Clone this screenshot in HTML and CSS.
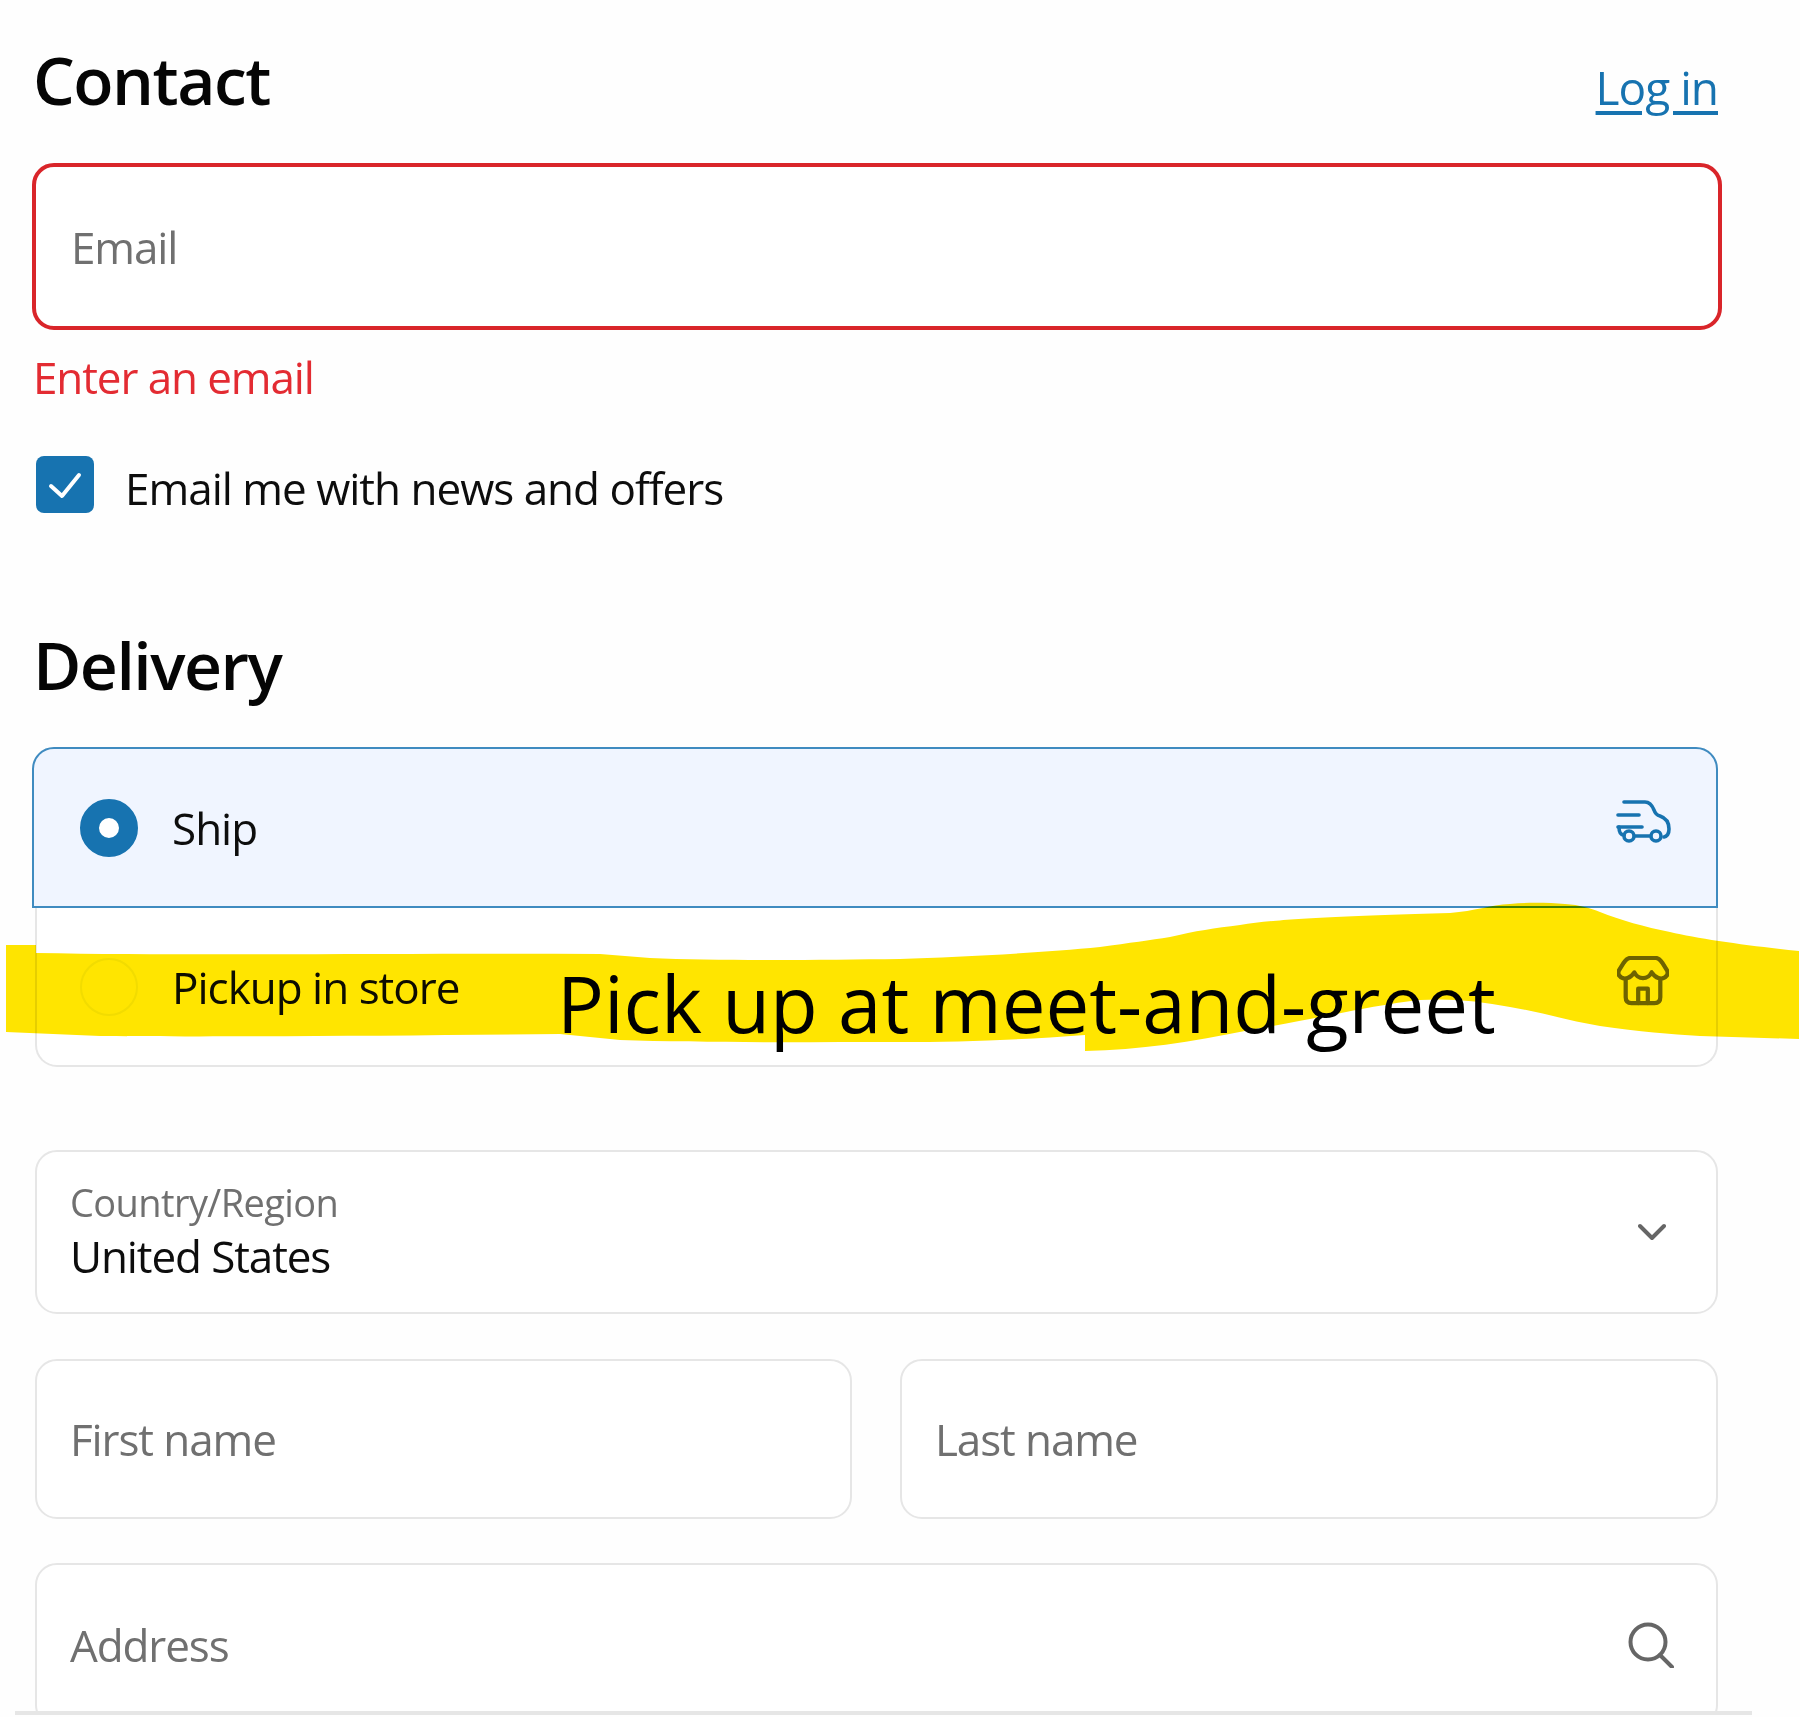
FILE: index.html
```html
<!DOCTYPE html>
<html lang="en">
<head>
<meta charset="utf-8">
<title>Checkout</title>
<link rel="stylesheet" href="styles.css">
</head>
<body>
<div class="page">
  <section class="contact">
    <header class="head">
      <h2 class="title">Contact</h2>
      <a class="login" href="#">Log in</a>
    </header>
    <div class="field field-error"><span class="ph">Email</span></div>
    <p class="error">Enter an email</p>
    <label class="check">
      <span class="box"><svg viewBox="0 0 58 57" width="58" height="57"><path d="M15 30l11 10 17-21" fill="none" stroke="#fff" stroke-width="4" stroke-linecap="round" stroke-linejoin="round"/></svg></span>
      <span class="check-text">Email me with news and offers</span>
    </label>
  </section>

  <section class="delivery">
    <h2 class="title title-delivery">Delivery</h2>
    <div class="options">
      <div class="option option-on">
        <span class="radio radio-on"></span>
        <span class="opt-text">Ship</span>
        <svg class="opt-icon" viewBox="0 0 56 46" width="56" height="46" fill="none" stroke="#1773b0" stroke-width="3.6" stroke-linecap="round" stroke-linejoin="round">
          <path d="M9 3h21c5 0 7 3 9 8 1 3 2 5 6 6 6 2 9 7 9 13 0 4-1 7-5 8"/>
          <path d="M3 16h21"/>
          <path d="M3 28h24"/>
          <path d="M4 28c0 4 1 8 5 8"/>
          <circle cx="14" cy="37" r="5"/>
          <circle cx="41" cy="37" r="5"/>
          <path d="M20 37h15"/>
        </svg>
      </div>
      <div class="option option-off">
        <span class="radio"></span>
        <span class="opt-text opt-text-pickup">Pickup in store</span>
        <svg class="opt-icon" viewBox="0 0 54 52" width="52" height="50" fill="none" stroke="#6e6e6e" stroke-width="4.4" stroke-linecap="round" stroke-linejoin="round">
          <path d="M14 2h26c3 0 5 2 7 5l5 8c1 2 1 3 0 5-2 3-6 4-9 3-3-1-5-3-7-6-2 4-5 6-9 6s-7-2-9-6c-2 3-4 5-7 6-3 1-7 0-9-3-1-2-1-3 0-5l5-8c2-3 4-5 7-5z"/>
          <path d="M9 24v19c0 4 2 6 6 6h24c4 0 6-2 6-6V24"/>
          <path d="M22 49V34h10v15"/>
        </svg>
      </div>
    </div>
  </section>

  <section class="address">
    <div class="field field-select">
      <div class="select-text">
        <span class="select-label">Country/Region</span>
        <span class="select-value">United States</span>
      </div>
      <svg class="chevron" viewBox="0 0 28 18" width="28" height="18" fill="none" stroke="#666" stroke-width="4" stroke-linecap="round" stroke-linejoin="round"><path d="M2 3l12 12L26 3"/></svg>
    </div>
    <div class="names">
      <div class="field field-name"><span class="ph">First name</span></div>
      <div class="field field-name field-last"><span class="ph">Last name</span></div>
    </div>
    <div class="clip">
      <div class="field field-address">
        <span class="ph">Address</span>
        <svg class="search" viewBox="0 0 46 46" width="46" height="46" fill="none" stroke="#666" stroke-width="4" stroke-linecap="round"><circle cx="20" cy="20" r="17.5"/><path d="M32 33l12 12"/></svg>
      </div>
    </div>
    <div class="rule"></div>
  </section>

  <svg class="marker" viewBox="0 0 1800 1717" width="1800" height="1717"><path fill="#ffe500" d="M6 945 L36 945 L36 953 C200 956 400 953 600 954 L650 958 C720 961 820 960 900 959 C960 957 1040 953 1100 947 C1130 943 1150 940 1170 937 C1195 931 1215 928 1240 925 C1280 919 1320 917 1450 913 C1475 911 1490 905 1510 904 C1530 902 1550 903 1565 904 C1580 905 1590 908 1600 912 C1620 920 1645 927 1670 932 C1700 939 1750 946 1799 951 L1799 1039 L1700 1036 C1670 1034 1640 1032 1600 1026 C1570 1021 1540 1012 1510 1007 C1480 1001 1450 998 1420 1000 C1380 1004 1330 1016 1250 1030 C1190 1042 1140 1050 1085 1051 L1085 1035 C1020 1040 960 1042 900 1042 C800 1042 700 1043 620 1040 L560 1034 C400 1036 200 1037 100 1036 L6 1032 Z"/></svg>
  <p class="note">Pick up at meet-and-greet</p>
</div>
</body>
</html>
```
FILE: styles.css
```css
* { box-sizing: border-box; }
html, body { margin: 0; padding: 0; background: #fefefe; }
body { font-family: "Open Sans", "Noto Sans", sans-serif; color: #0d0d0d; }
.page { position: relative; width: 1800px; height: 1717px; overflow: hidden; padding-left: 32px; }

.contact { width: 1690px; }
.head { display: flex; justify-content: space-between; align-items: flex-start; width: 1686px; height: 163px; padding-top: 35px; }
.title { margin: 0; font-size: 66px; line-height: 88px; font-weight: 600; letter-spacing: -1.5px; color: #050505; padding-left: 1px; }
.login { margin-top: 22px; font-size: 46px; line-height: 60px; letter-spacing: -1px; color: #1773b0; text-decoration: underline; text-decoration-thickness: 3.5px; text-underline-offset: 6px; }

.field { display: flex; align-items: center; justify-content: space-between; background: #fff; border: 2px solid #e6e6e6; border-radius: 22px; padding-left: 33px; }
.ph { font-size: 44px; line-height: 60px; letter-spacing: -1.1px; color: #707070; }
.field-error { height: 167px; border: 4.5px solid #d9252a; padding-left: 35px; }
.error { margin: 17px 0 0 1px; font-size: 44px; line-height: 60px; letter-spacing: -1.1px; color: #e32b32; }
.check { display: flex; align-items: center; margin: 43px 0 0 4px; }
.box { display: block; width: 58px; height: 57px; border-radius: 8px; background: #1773b0; }
.box svg { display: block; }
.check-text { margin-left: 31px; font-size: 44px; line-height: 60px; letter-spacing: -1px; padding-top: 8px; }

.delivery { width: 1686px; }
.title-delivery { margin-top: 102px; }
.options { margin-top: 39px; }
.option { position: relative; display: flex; align-items: center; }
.option-on { height: 161px; background: #f0f5ff; border: 2px solid #3f8bc0; border-radius: 22px 22px 0 0; padding-left: 46px; }
.option-off { height: 159px; margin-left: 3px; background: #fff; border: 2px solid #e6e6e6; border-top: 0; border-radius: 0 0 22px 22px; padding-left: 43px; }
.radio { flex: none; width: 58px; height: 58px; border-radius: 50%; background: #fff; border: 2px solid #f2f5e6; }
.radio-on { border: 19px solid #1773b0; }
.opt-text { margin-left: 34px; font-size: 44px; line-height: 60px; letter-spacing: -1px; }
.opt-icon { position: absolute; right: 45px; top: 50px; }
.option-off .opt-icon { right: 47px; top: 48px; }

.address { width: 1683px; margin-left: 3px; padding-top: 83px; }
.field-select { height: 164px; padding-right: 50px; }
.select-text { display: flex; flex-direction: column; }
.select-label { font-size: 38px; line-height: 48px; letter-spacing: -0.6px; color: #707070; }
.select-value { font-size: 44px; line-height: 60px; letter-spacing: -1.1px; }
.names { display: flex; justify-content: space-between; margin-top: 45px; }
.field-name { width: 817px; height: 160px; }
.field-last { width: 818px; }
.clip { height: 148px; margin-top: 44px; overflow: hidden; }
.field-address { height: 164px; padding-right: 42px; }
.rule { width: 1737px; height: 4px; margin-left: -20px; background: #e6e6e6; }

.marker { position: absolute; left: 0; top: 0; mix-blend-mode: multiply; pointer-events: none; }
.note { position: absolute; left: 557px; top: 953px; margin: 0; font-size: 78px; line-height: 100px; color: #000; white-space: nowrap; }
```
